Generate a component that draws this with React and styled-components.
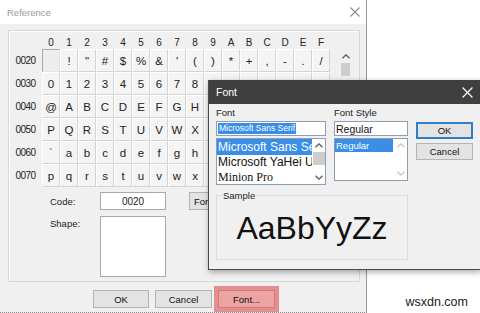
import React from 'react';
import styled, { createGlobalStyle } from 'styled-components';

const GlobalStyle = createGlobalStyle`
  html, body {
    margin: 0;
    padding: 0;
    background: #fff;
  }
  body {
    font-family: "Liberation Sans", Arial, sans-serif;
    color: #000;
  }
`;

const Screen = styled.div`
  position: relative;
  width: 480px;
  height: 313px;
  overflow: hidden;
  background: #fff;
`;

const RefWindow = styled.div`
  width: 367px;
  height: 313px;
  box-sizing: border-box;
  border-right: 1px solid #9a9a9a;
  border-bottom: 1px dotted #8a8a8a;
  background: #f0f0f0;
  display: flex;
  flex-direction: column;
`;

const TitleBar = styled.div`
  flex: none;
  height: 24px;
  display: flex;
  align-items: center;
  justify-content: space-between;
  padding: ${(p) => (p.$dark ? '0 7px 0 7px' : '0 6px 0 7px')};
  background: ${(p) => (p.$dark ? '#3f3f3f' : '#fff')};
  color: ${(p) => (p.$dark ? '#fff' : '#9a9a9a')};
  font-size: ${(p) => (p.$dark ? '10.5px' : '9.5px')};
`;

const RefBody = styled.div`
  flex: 1;
  padding: 6px 6px 0 8px;
  display: flex;
  flex-direction: column;
`;

const Panel = styled.div`
  width: 352px;
  height: 252px;
  box-sizing: border-box;
  border: 1px solid #d7d7d7;
  box-shadow: inset 1px 1px 0 #fff;
  display: flex;
  flex-direction: column;
`;

const TableRow = styled.div`
  display: flex;
  align-items: flex-start;
`;

const CharTable = styled.div`
  display: grid;
  grid-template-columns: 33px repeat(16, 18px);
  grid-template-rows: 18px repeat(6, 23px);
`;

const ColHead = styled.div`
  display: flex;
  align-items: flex-end;
  justify-content: center;
  padding-bottom: 1px;
  font-size: 10px;
  color: #222;
`;

const RowHead = styled.div`
  display: flex;
  align-items: center;
  justify-content: center;
  font-size: 10px;
  letter-spacing: -0.6px;
  color: #222;
`;

const Cell = styled.div`
  box-sizing: border-box;
  display: flex;
  align-items: center;
  justify-content: center;
  font-size: 11.5px;
  color: #222;
  background: ${(p) => (p.$selected ? '#ededed' : '#f4f4f4')};
  border-top: 1px solid ${(p) => (p.$selected ? '#a9a9a9' : '#fff')};
  border-left: 1px solid ${(p) => (p.$selected ? '#a9a9a9' : '#fff')};
  border-right: 1px solid ${(p) => (p.$selected ? '#e2e2e2' : '#d3d3d3')};
  border-bottom: 1px solid ${(p) => (p.$selected ? '#e2e2e2' : '#d3d3d3')};
`;

const VScroll = styled.div`
  margin: 18px 0 0 8px;
  width: 15px;
  height: 138px;
  display: flex;
  flex-direction: column;
  align-items: center;
`;

const ScrollArrow = styled.div`
  flex: none;
  height: ${(p) => p.$h || 14}px;
  display: flex;
  align-items: center;
  justify-content: center;
`;

const ScrollThumb = styled.div`
  flex: none;
  width: ${(p) => p.$w || 9}px;
  height: ${(p) => p.$h || 13}px;
  background: #cdcdcd;
`;

const ScrollTrack = styled.div`
  flex: 1;
`;

const FormGrid = styled.div`
  margin-top: 5px;
  padding-left: 41px;
  display: grid;
  grid-template-columns: 50px 66px auto;
  grid-template-rows: 18px 61px;
  row-gap: 6px;
`;

const FieldLabel = styled.div`
  font-size: 9.5px;
  color: #222;
  align-self: ${(p) => (p.$top ? 'start' : 'center')};
  padding-top: ${(p) => (p.$top ? '2px' : '0')};
`;

const WhiteBox = styled.div`
  box-sizing: border-box;
  background: #fff;
  border: 1px solid #a9a9a9;
  font-size: 10px;
  color: #222;
  display: flex;
  justify-content: center;
  align-items: center;
`;

const Button = styled.button`
  box-sizing: border-box;
  width: ${(p) => p.$w || 56}px;
  height: ${(p) => p.$h || 18}px;
  margin: 0;
  padding: 0;
  font-family: inherit;
  font-size: 9.5px;
  color: #111;
  text-align: ${(p) => (p.$left ? 'left' : 'center')};
  padding-left: ${(p) => (p.$left ? '4px' : '0')};
  background: ${(p) => (p.$hot ? '#eba3a3' : '#e3e3e3')};
  border: 1px solid ${(p) => (p.$primary ? '#2f7fc8' : p.$hot ? '#cf7c7c' : '#b4b4b4')};
  box-shadow: ${(p) => (p.$primary ? 'inset 0 0 0 1px #2f7fc8' : 'none')};
`;

const ButtonRow = styled.div`
  margin-top: 8px;
  display: flex;
  justify-content: center;
  gap: 6px;
`;

const Highlight = styled.div`
  display: flex;
  margin: -4px;
  padding: 4px;
  background: #e48e8e;
`;

const FontDialog = styled.div`
  position: absolute;
  left: 208px;
  top: 80px;
  width: 273px;
  height: 190px;
  box-sizing: border-box;
  border: 1px solid #4a4a4a;
  border-top: none;
  background: #f0f0f0;
  box-shadow: 1px 2px 6px rgba(0, 0, 0, 0.35);
  display: flex;
  flex-direction: column;
`;

const DialogBody = styled.div`
  padding: 2px 7px 0 7px;
  display: flex;
  flex-direction: column;
`;

const Columns = styled.div`
  display: flex;
  gap: 8px;
`;

const Column = styled.div`
  width: ${(p) => p.$w}px;
  display: flex;
  flex-direction: column;
`;

const SmallLabel = styled.div`
  height: 13px;
  line-height: 13px;
  font-size: 9.5px;
  color: #222;
  margin-bottom: 2px;
`;

const TextField = styled.div`
  box-sizing: border-box;
  height: 15px;
  background: #fff;
  border: 1px solid #8d9db4;
  display: flex;
  align-items: center;
  padding-left: 1px;
  font-size: 10.5px;
  color: #111;
  white-space: nowrap;
  overflow: hidden;
`;

const Selection = styled.span`
  background: #3a8ee6;
  color: #fff;
  font-size: 8.5px;
  line-height: 11px;
  padding: 0 1px;
`;

const ListBox = styled.div`
  box-sizing: border-box;
  margin-top: 2px;
  height: ${(p) => p.$h}px;
  background: #fff;
  border: 1px solid #8d9db4;
  display: flex;
`;

const ListItems = styled.div`
  flex: 1;
  min-width: 0;
  overflow: hidden;
  display: flex;
  flex-direction: column;
`;

const ListItem = styled.div`
  flex: none;
  height: ${(p) => p.$h || 15}px;
  line-height: ${(p) => p.$h || 15}px;
  padding-left: 1px;
  white-space: nowrap;
  overflow: hidden;
  font-family: ${(p) => (p.$serif ? '"Liberation Serif", "Times New Roman", serif' : 'inherit')};
  font-size: ${(p) => p.$size || 12}px;
  background: ${(p) => (p.$selected ? '#3a8ee6' : 'transparent')};
  color: ${(p) => (p.$selected ? '#fff' : '#111')};
  margin-right: ${(p) => (p.$gap ? p.$gap : 0)}px;
`;

const ListScroll = styled.div`
  flex: none;
  width: 13px;
  display: flex;
  flex-direction: column;
  align-items: center;
  background: #fff;
`;

const Sample = styled.fieldset`
  margin: 5px 0 0 0;
  padding: 0;
  width: 192px;
  height: 70px;
  box-sizing: border-box;
  min-width: 0;
  border: 1px solid #dadada;
  display: flex;
  align-items: flex-start;
  justify-content: center;
`;

const Legend = styled.legend`
  margin-left: 5px;
  padding: 0 1px;
  font-size: 9.5px;
  color: #222;
`;

const SampleText = styled.div`
  font-size: 32px;
  line-height: 36px;
  color: #111;
  margin-top: 9px;
`;

const Watermark = styled.div`
  position: absolute;
  right: 12px;
  bottom: 4px;
  font-size: 12.5px;
  color: #222;
`;

const Close = ({ color, size = 10 }) => (
  <svg width={size} height={size} viewBox="0 0 10 10">
    <path d="M0.5 0.5 L9.5 9.5 M9.5 0.5 L0.5 9.5" stroke={color} strokeWidth="1.1" fill="none" />
  </svg>
);

const Chevron = ({ down, color = '#555' }) => (
  <svg width="8" height="5" viewBox="0 0 8 5">
    <polyline
      points={down ? '0.5,0.8 4,4.2 7.5,0.8' : '0.5,4.2 4,0.8 7.5,4.2'}
      stroke={color}
      strokeWidth="1.2"
      fill="none"
    />
  </svg>
);

const heads = '0123456789ABCDEF'.split('');
const rows = [
  ['0020', ' !"#$%&\'()*+,-./'],
  ['0030', '0123456789:;<=>?'],
  ['0040', '@ABCDEFGHIJKLMNO'],
  ['0050', 'PQRSTUVWXYZ[\\]^_'],
  ['0060', '`abcdefghijklmno'],
  ['0070', 'pqrstuvwxyz{|}~ '],
];

export default function App() {
  return (
    <Screen>
      <GlobalStyle />
      <RefWindow>
        <TitleBar>
          <span>Reference</span>
          <Close color="#8a8a8a" />
        </TitleBar>
        <RefBody>
          <Panel>
            <TableRow>
              <CharTable>
                <div />
                {heads.map((h) => (
                  <ColHead key={h}>{h}</ColHead>
                ))}
                {rows.map(([code, chars]) => (
                  <React.Fragment key={code}>
                    <RowHead>{code}</RowHead>
                    {chars.split('').map((ch, i) => (
                      <Cell key={i} $selected={code === '0020' && i === 0}>
                        {ch}
                      </Cell>
                    ))}
                  </React.Fragment>
                ))}
              </CharTable>
              <VScroll>
                <ScrollArrow $h={14}>
                  <Chevron />
                </ScrollArrow>
                <ScrollThumb $h={13} />
                <ScrollTrack />
                <ScrollArrow $h={14}>
                  <Chevron down />
                </ScrollArrow>
              </VScroll>
            </TableRow>
            <FormGrid>
              <FieldLabel>Code:</FieldLabel>
              <WhiteBox>0020</WhiteBox>
              <Button $w={34} $left style={{ marginLeft: 23 }}>
                Font...
              </Button>
              <FieldLabel $top>Shape:</FieldLabel>
              <WhiteBox />
            </FormGrid>
          </Panel>
          <ButtonRow>
            <Button $w={56}>OK</Button>
            <Button $w={57}>Cancel</Button>
            <Highlight>
              <Button $w={57} $hot>
                Font...
              </Button>
            </Highlight>
          </ButtonRow>
        </RefBody>
      </RefWindow>

      <FontDialog>
        <TitleBar $dark>
          <span>Font</span>
          <Close color="#fff" size={11} />
        </TitleBar>
        <DialogBody>
          <Columns>
            <Column $w={110}>
              <SmallLabel>Font</SmallLabel>
              <TextField>
                <Selection>Microsoft Sans Serif</Selection>
              </TextField>
              <ListBox $h={47}>
                <ListItems>
                  <ListItem $selected $h={16}>Microsoft Sans Serif</ListItem>
                  <ListItem $h={15}>Microsoft YaHei UI</ListItem>
                  <ListItem $serif $h={15}>Minion Pro</ListItem>
                </ListItems>
                <ListScroll>
                  <ScrollArrow $h={13}>
                    <Chevron />
                  </ScrollArrow>
                  <ScrollThumb $w={12} $h={13} />
                  <ScrollTrack />
                  <ScrollArrow $h={13}>
                    <Chevron down />
                  </ScrollArrow>
                </ListScroll>
              </ListBox>
            </Column>
            <Column $w={74}>
              <SmallLabel>Font Style</SmallLabel>
              <TextField>Regular</TextField>
              <ListBox $h={43}>
                <ListItems>
                  <ListItem $selected $h={13} $size={9.5} $gap={1}>
                    Regular
                  </ListItem>
                </ListItems>
                <ListScroll>
                  <ScrollArrow $h={13}>
                    <Chevron color="#c4c4c4" />
                  </ScrollArrow>
                  <ScrollTrack />
                  <ScrollArrow $h={13}>
                    <Chevron down color="#c4c4c4" />
                  </ScrollArrow>
                </ListScroll>
              </ListBox>
            </Column>
            <Column $w={57}>
              <Button $w={57} $h={17} $primary style={{ marginTop: 16 }}>
                OK
              </Button>
              <Button $w={57} $h={17} style={{ marginTop: 4 }}>
                Cancel
              </Button>
            </Column>
          </Columns>
          <Sample>
            <Legend>Sample</Legend>
            <SampleText>AaBbYyZz</SampleText>
          </Sample>
        </DialogBody>
      </FontDialog>

      <Watermark>wsxdn.com</Watermark>
    </Screen>
  );
}
